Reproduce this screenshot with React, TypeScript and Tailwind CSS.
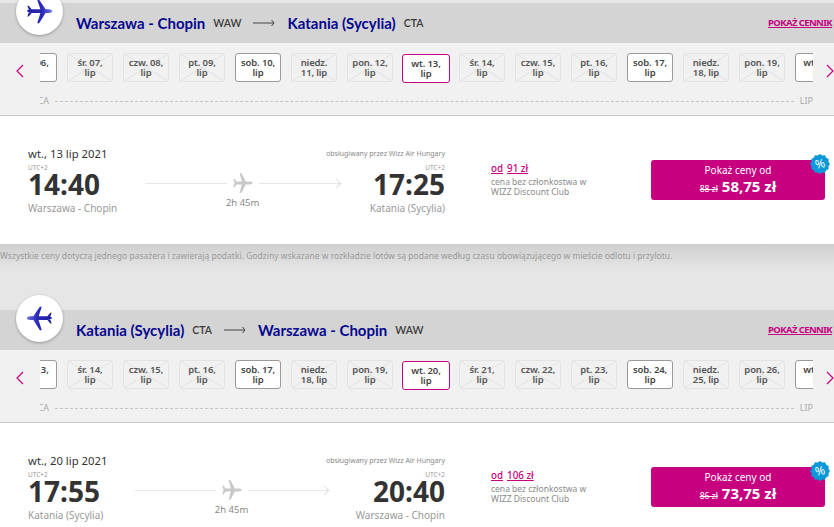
import React from "react";

const BODY = { fontFamily: '"Noto Sans", sans-serif' };
const HEAD = { fontFamily: 'Lato, "Noto Sans", sans-serif' };

function BluePlane({ flip }: { flip?: boolean }) {
  return (
    <svg width="27" height="27" viewBox="0 0 30 30" className={flip ? "block -scale-x-100" : "block"}>
      <defs>
        <linearGradient id="pl" x1="0" y1="0" x2="1" y2="0">
          <stop offset="0" stopColor="#1d1d9f" />
          <stop offset="0.6" stopColor="#2a2ab8" />
          <stop offset="1" stopColor="#6f74dc" />
        </linearGradient>
      </defs>
      <path
        fill="url(#pl)"
        d="M1 14.5 C2 12.9 5 12.6 9 12.6 L16 12.6 L12.5 2 L14.6 2 L21.8 12.6 L25 12.6 C27.5 12.7 28.8 13.5 29 14.6 C28.8 15.7 27.5 16.5 25 16.6 L21.8 16.6 L14.6 28 L12.5 28 L16 16.6 L9 16.6 C5 16.6 2 16.2 1 14.5 Z M1.5 8.5 L3 8.5 L6.5 12.8 L3 12.8 Z M3 16.3 L6.5 16.3 L3 20.5 L1.5 20.5 Z"
      />
    </svg>
  );
}

function GrayPlane() {
  return (
    <svg width="20" height="20" viewBox="0 0 20 20" className="block shrink-0">
      <path
        fill="#c9c9c9"
        d="M19.6 9.9 C19.6 8.9 17.8 8.5 16.6 8.5 L12.8 8.5 L8.6 0.2 L6.6 0.2 L8.8 8.5 L3.6 8.5 L1.6 5.8 L0.3 5.8 L1.6 10 L0.3 14.2 L1.6 14.2 L3.6 11.5 L8.8 11.5 L6.6 19.8 L8.6 19.8 L12.8 11.5 L16.6 11.4 C17.8 11.3 19.6 10.9 19.6 9.9 Z"
      />
    </svg>
  );
}

function ThinArrow() {
  return (
    <svg width="22" height="8" viewBox="0 0 22 8" className="block">
      <path d="M0 4 H21 M18.5 1 L21 4 L18.5 7" stroke="#444" strokeWidth="1" fill="none" />
    </svg>
  );
}

function Badge() {
  const pts: string[] = [];
  const n = 24;
  for (let i = 0; i < n; i++) {
    const a = (i / n) * Math.PI * 2;
    const r = i % 2 === 0 ? 10 : 8.8;
    pts.push(`${(10 + r * Math.cos(a)).toFixed(2)},${(10 + r * Math.sin(a)).toFixed(2)}`);
  }
  return (
    <span className="absolute right-[-5px] top-[-6px] flex h-[20px] w-[20px] items-center justify-center text-white">
      <svg width="20" height="20" viewBox="0 0 20 20" className="absolute inset-0">
        <polygon points={pts.join(" ")} fill="#0a98d8" />
      </svg>
      <span className="relative -rotate-12 text-[12px] leading-none">%</span>
    </span>
  );
}

type Day = { t: string; k: "off" | "on" | "sel" };

function DayCard({ t, k }: Day) {
  const text = "text-center text-[9.5px] font-semibold leading-[10px] tracking-[-0.15px]";
  if (k === "sel") {
    return (
      <div className={"relative flex h-[29px] w-[48px] shrink-0 items-center justify-center rounded-[3px] border border-[#c6007e] bg-white px-[3px] mt-px -mx-px text-[#444] " + text}>
        {t}
      </div>
    );
  }
  return (
    <div
      className={
        k === "on"
          ? "relative flex h-[29px] w-[46px] shrink-0 items-center justify-center rounded-[3px] border border-[#9a9a9a] bg-white px-[3px] text-[#444] " + text
          : "relative flex h-[29px] w-[46px] shrink-0 items-center justify-center rounded-[3px] border border-[#e3e3e3] px-[3px] text-[#555] " + text
      }
    >
      {k === "off" && (
        <svg className="absolute inset-0 h-full w-full" viewBox="0 0 44 27" preserveAspectRatio="none">
          <path d="M0 27 L44 0 M0 0 L44 27" stroke="#e2e2e2" strokeWidth="1" fill="none" />
        </svg>
      )}
      <span className="relative">{t}</span>
    </div>
  );
}

function Chevron({ right }: { right?: boolean }) {
  return (
    <svg width="8" height="14" viewBox="0 0 8 14" className="block shrink-0">
      <path
        d={right ? "M1 1 L7 7 L1 13" : "M7 1 L1 7 L7 13"}
        stroke="#c6007e"
        strokeWidth="1.2"
        fill="none"
      />
    </svg>
  );
}

type Flight = {
  from: string;
  fromCode: string;
  to: string;
  toCode: string;
  days: Day[];
  date: string;
  dep: string;
  arr: string;
  member: string;
  old: string;
  price: string;
  flip?: boolean;
};

function Section({ f, topPad }: { f: Flight; topPad: string }) {
  return (
    <section className={topPad}>
      <header className="relative flex h-[40px] items-center bg-[#d4d4d4] pl-[76px] pr-[2px]" style={HEAD}>
        <div className="absolute left-[16px] top-[-15px] flex h-[47px] w-[47px] items-center justify-center rounded-full bg-white shadow-[0_1px_3px_rgba(0,0,0,0.3)]">
          <BluePlane flip={f.flip} />
        </div>
        <span className="text-[15px] font-bold text-[#06068f]">{f.from}</span>
        <span className="ml-[8px] mt-[1px] text-[10.5px] font-semibold text-[#3a3a3a]">{f.fromCode}</span>
        <span className="mx-[12px]">
          <ThinArrow />
        </span>
        <span className="text-[15px] font-bold text-[#06068f]">{f.to}</span>
        <span className="ml-[8px] mt-[1px] text-[10.5px] font-semibold text-[#3a3a3a]">{f.toCode}</span>
        <a className="ml-auto text-[9.5px] font-bold tracking-[-0.6px] text-[#c6007e] underline" style={BODY}>
          POKAŻ CENNIK
        </a>
      </header>

      <div className="h-[73px] border-b border-[#c9c9c9] bg-[#f1f1f1]" style={BODY}>
        <div className="flex items-start pt-[10px]">
          <div className="flex w-[40px] shrink-0 justify-center pr-[1px] pt-[11px]">
            <Chevron />
          </div>
          <div className="w-[773px] shrink-0 overflow-hidden">
            <div className="-ml-[29px] flex w-[850px] items-start gap-[10px]">
              {f.days.map((d, i) => (
                <DayCard key={i} {...d} />
              ))}
            </div>
          </div>
          <div className="flex flex-1 justify-end overflow-hidden pt-[11px] pl-[15px]">
            <Chevron right />
          </div>
        </div>
        <div className="ml-[40px] mt-[13px] flex h-[10px] w-[773px] items-center overflow-hidden text-[9px] text-[#aaa]">
          <span className="-ml-[8px]">{"LIPCA".slice(2)}</span>
          <span className="mx-[6px] flex-1 border-t border-dashed border-[#c4c4c4]" />
          <span>LIP</span>
        </div>
      </div>

      <div className="flex h-[128px] bg-white pl-[28px] pr-[9px] pt-[31px]" style={BODY}>
        <div className="flex w-[417px] shrink-0">
          <div className="flex shrink-0 flex-col">
            <div className="h-[14px] text-[11.3px] leading-[14px] text-[#333]">{f.date}</div>
            <div className="mt-[3px] h-[7px] text-[6.5px] leading-[7px] text-[#999]">UTC+2</div>
            <div className="h-[27px] text-[28px] font-bold leading-[27px] text-[#333]">{f.dep}</div>
            <div className="mt-[3px] text-[10px] leading-[14px] text-[#999]">{f.from}</div>
          </div>
          <div className="flex min-w-0 flex-1 flex-col items-center px-[28px] pt-[26px]">
            <div className="flex w-full items-center gap-[6px]">
              <span className="h-[1px] flex-1 bg-[#e6e6e6]" />
              <GrayPlane />
              <span className="relative h-[1px] flex-1 bg-[#e6e6e6]">
                <span className="absolute right-0 top-[-3px] h-[7px] w-[7px] rotate-45 border-r border-t border-[#e0e0e0]" />
              </span>
            </div>
            <div className="mt-[3px] text-[9.5px] leading-[14px] text-[#888]">2h 45m</div>
          </div>
          <div className="flex min-w-[77px] shrink-0 flex-col items-end">
            <div className="flex h-[14px] w-0 justify-end whitespace-nowrap text-[7px] leading-[14px] text-[#888]">obsługiwany przez Wizz Air Hungary</div>
            <div className="mt-[3px] h-[7px] text-[6.5px] leading-[7px] text-[#999]">UTC+2</div>
            <div className="h-[27px] text-[28px] font-bold leading-[27px] text-[#333]">{f.arr}</div>
            <div className="mt-[3px] text-[10px] leading-[14px] text-[#999]">{f.to}</div>
          </div>
        </div>

        <div className="ml-[46px] w-[160px] shrink-0 pt-[15px]">
          <div className="flex gap-[4px] text-[9.8px] font-medium leading-[13px] text-[#c6007e]">
            <span className="underline">od</span>
            <span className="underline">{f.member}</span>
          </div>
          <div className="mt-[2px] text-[8.5px] leading-[10px] text-[#8a8a8a]">
            cena bez członkostwa w
            <br />
            WIZZ Discount Club
          </div>
        </div>

        <button className="relative mt-[13px] flex h-[40px] w-[174px] shrink-0 flex-col items-center justify-center rounded-[3px] bg-[#c6007e] text-white">
          <span className="text-[10px] leading-[14px]">Pokaż ceny od</span>
          <span className="flex items-baseline gap-[4px] leading-[18px]">
            <span className="text-[8.5px] line-through">{f.old}</span>
            <span className="text-[15px] font-bold">{f.price}</span>
          </span>
          <Badge />
        </button>
      </div>
    </section>
  );
}

const d = (t: string, k: Day["k"] = "off"): Day => ({ t, k });

const first: Flight = {
  from: "Warszawa - Chopin",
  fromCode: "WAW",
  to: "Katania (Sycylia)",
  toCode: "CTA",
  date: "wt., 13 lip 2021",
  dep: "14:40",
  arr: "17:25",
  member: "91 zł",
  old: "88 zł",
  price: "58,75 zł",
  days: [
    d("wt. 06, lip", "on"),
    d("śr. 07, lip"),
    d("czw. 08, lip"),
    d("pt. 09, lip"),
    d("sob. 10, lip", "on"),
    d("niedz. 11, lip"),
    d("pon. 12, lip"),
    d("wt. 13, lip", "sel"),
    d("śr. 14, lip"),
    d("czw. 15, lip"),
    d("pt. 16, lip"),
    d("sob. 17, lip", "on"),
    d("niedz. 18, lip"),
    d("pon. 19, lip"),
    d("wt. 20, lip", "on"),
  ],
};

const second: Flight = {
  from: "Katania (Sycylia)",
  fromCode: "CTA",
  to: "Warszawa - Chopin",
  toCode: "WAW",
  date: "wt., 20 lip 2021",
  dep: "17:55",
  arr: "20:40",
  member: "106 zł",
  old: "86 zł",
  price: "73,75 zł",
  flip: true,
  days: [
    d("wt. 13, lip", "on"),
    d("śr. 14, lip"),
    d("czw. 15, lip"),
    d("pt. 16, lip"),
    d("sob. 17, lip", "on"),
    d("niedz. 18, lip"),
    d("pon. 19, lip"),
    d("wt. 20, lip", "sel"),
    d("śr. 21, lip"),
    d("czw. 22, lip"),
    d("pt. 23, lip"),
    d("sob. 24, lip", "on"),
    d("niedz. 25, lip"),
    d("pon. 26, lip"),
    d("wt. 27, lip", "on"),
  ],
};

export default function App() {
  return (
    <div className="h-[527px] w-[834px] overflow-hidden bg-[#e6e6e6]">
      <Section f={first} topPad="pt-[3px]" />
      <div className="h-[66px] bg-gradient-to-b from-[#cfcfcf] to-[#e6e6e6] to-[40%] pt-[6px] text-[8.5px] leading-[12px] text-[#999]" style={BODY}>
        Wszystkie ceny dotyczą jednego pasażera i zawierają podatki. Godziny wskazane w rozkładzie lotów są podane według czasu obowiązującego w mieście odlotu i przylotu.
      </div>
      <Section f={second} topPad="" />
    </div>
  );
}
